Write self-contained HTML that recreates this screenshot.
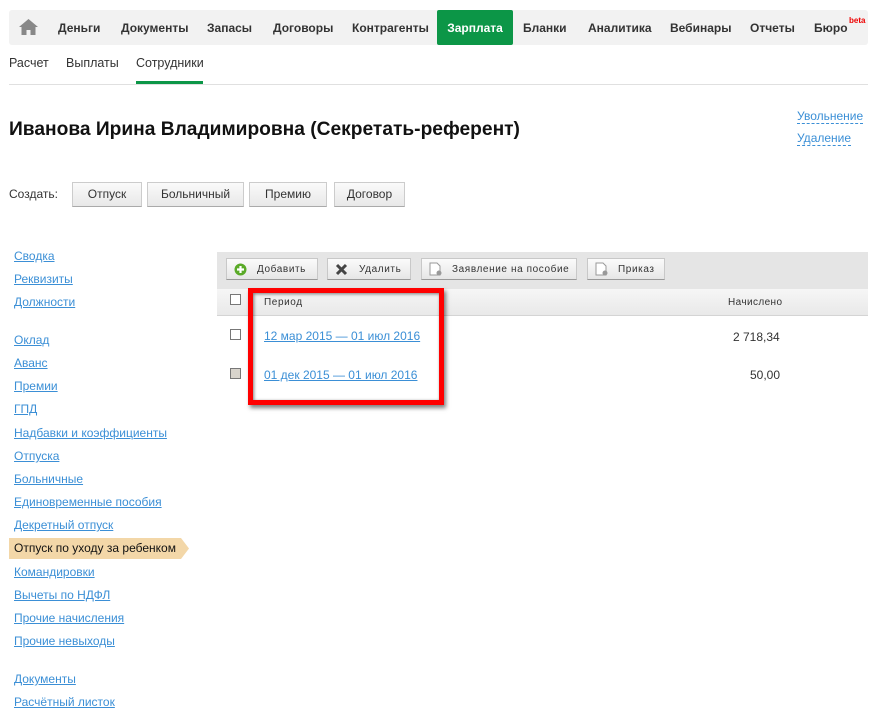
<!DOCTYPE html>
<html><head><meta charset="utf-8"><style>
*{margin:0;padding:0;box-sizing:border-box}
body{width:881px;height:723px;background:#fff;font-family:"Liberation Sans",Arial,sans-serif;position:relative;overflow:hidden;color:#222}
.a{position:absolute;white-space:nowrap}
.nav{left:9px;top:10px;width:859px;height:35px;background:#f2f2f2;border-radius:3px}
.ni{font-size:12px;font-weight:bold;color:#333;top:21px}
.act{left:437px;top:10px;width:76px;height:35px;background:#0c9647;border-radius:2px;color:#fff;font-weight:bold;font-size:12px;text-align:center;line-height:37px}
.sub{font-size:12.5px;color:#333;top:56px}
a,.lk{color:#3b8fd6;text-decoration:underline}
.side{font-size:12px;left:14px}
.btn{top:182px;height:25px;background:linear-gradient(#fafafa,#e8e8e8);border:1px solid #ccc;border-bottom-color:#aaa;font-size:12px;color:#333;text-align:center;line-height:23px}
.tb{top:258px;height:22px;background:linear-gradient(#fbfbfb,#e6e6e6);border:1px solid #c8c8c8;border-bottom-color:#999;font-size:10px;letter-spacing:.6px;color:#333;line-height:21px}
.cb{width:11px;height:11px;border:1px solid #777;background:#fff}
.dl{font-size:12px;color:#3b8fd6;border-bottom:1px dashed #3b8fd6;line-height:14px}
</style></head><body>
<div class="a nav"></div>
<svg class="a" style="left:19px;top:19px" width="19" height="16" viewBox="0 0 19 16"><path d="M9.5 0L0 8h2.5v8h5v-5h4v5h5V8H19z" fill="#888"/></svg>
<div class="a ni" style="left:58px">Деньги</div>
<div class="a ni" style="left:121px">Документы</div>
<div class="a ni" style="left:207px">Запасы</div>
<div class="a ni" style="left:273px">Договоры</div>
<div class="a ni" style="left:352px">Контрагенты</div>
<div class="a act">Зарплата</div>
<div class="a ni" style="left:523px">Бланки</div>
<div class="a ni" style="left:588px">Аналитика</div>
<div class="a ni" style="left:670px">Вебинары</div>
<div class="a ni" style="left:750px">Отчеты</div>
<div class="a ni" style="left:814px">Бюро</div>
<div class="a" style="left:849px;top:16px;font-size:8px;color:#e00;font-weight:bold">beta</div>
<div class="a sub" style="left:9px">Расчет</div>
<div class="a sub" style="left:66px">Выплаты</div>
<div class="a sub" style="left:136px">Сотрудники</div>
<div class="a" style="left:136px;top:81px;width:67px;height:3px;background:#0c9647"></div>
<div class="a" style="left:9px;top:84px;width:859px;height:1px;background:#e0e0e0"></div>
<div class="a" style="left:9px;top:119px;font-size:19.2px;font-weight:bold;color:#111">Иванова Ирина Владимировна (Секретать-референт)</div>
<div class="a dl" style="left:797px;top:109px">Увольнение</div>
<div class="a dl" style="left:797px;top:131px">Удаление</div>
<div class="a" style="left:9px;top:187px;font-size:12px;color:#333">Создать:</div>
<div class="a btn" style="left:72px;width:70px">Отпуск</div>
<div class="a btn" style="left:147px;width:97px">Больничный</div>
<div class="a btn" style="left:249px;width:78px">Премию</div>
<div class="a btn" style="left:334px;width:71px">Договор</div>

<div class="a side lk" style="top:249px">Сводка</div>
<div class="a side lk" style="top:272px">Реквизиты</div>
<div class="a side lk" style="top:295px">Должности</div>
<div class="a side lk" style="top:333px">Оклад</div>
<div class="a side lk" style="top:356px">Аванс</div>
<div class="a side lk" style="top:379px">Премии</div>
<div class="a side lk" style="top:402px">ГПД</div>
<div class="a side lk" style="top:426px">Надбавки и коэффициенты</div>
<div class="a side lk" style="top:449px">Отпуска</div>
<div class="a side lk" style="top:472px">Больничные</div>
<div class="a side lk" style="top:495px">Единовременные пособия</div>
<div class="a side lk" style="top:518px">Декретный отпуск</div>
<svg class="a" style="left:9px;top:538px" width="180" height="21"><path d="M0 0H172L180 10.5L172 21H0z" fill="#f3d7a8"/></svg>
<div class="a side" style="top:541px;color:#111">Отпуск по уходу за ребенком</div>
<div class="a side lk" style="top:565px">Командировки</div>
<div class="a side lk" style="top:588px">Вычеты по НДФЛ</div>
<div class="a side lk" style="top:611px">Прочие начисления</div>
<div class="a side lk" style="top:634px">Прочие невыходы</div>
<div class="a side lk" style="top:672px">Документы</div>
<div class="a side lk" style="top:695px">Расчётный листок</div>

<div class="a" style="left:217px;top:252px;width:651px;height:37px;background:#e5e5e5"></div>
<div class="a" style="left:217px;top:289px;width:651px;height:27px;background:linear-gradient(#f6f6f6,#e9e9e9);border-bottom:1px solid #d4d4d4"></div>
<div class="a tb" style="left:226px;width:92px"><svg style="position:absolute;left:7px;top:4px" width="13" height="13"><circle cx="6.5" cy="6.5" r="6" fill="#5aaa28"/><path d="M6.5 3v7M3 6.5h7" stroke="#fff" stroke-width="2.2"/></svg><span style="position:absolute;left:30px">Добавить</span></div>
<div class="a tb" style="left:327px;width:84px"><svg style="position:absolute;left:7px;top:4px" width="13" height="13"><path d="M2 2l9 9M11 2l-9 9" stroke="#444" stroke-width="3"/></svg><span style="position:absolute;left:31px">Удалить</span></div>
<div class="a tb" style="left:421px;width:156px"><svg style="position:absolute;left:6px;top:3px" width="15" height="15"><path d="M2 1h7l3 3v9H2z" fill="#fff" stroke="#999"/><circle cx="11" cy="11" r="2.5" fill="#999"/></svg><span style="position:absolute;left:30px">Заявление на пособие</span></div>
<div class="a tb" style="left:587px;width:78px"><svg style="position:absolute;left:6px;top:3px" width="15" height="15"><path d="M2 1h7l3 3v9H2z" fill="#fff" stroke="#999"/><circle cx="11" cy="11" r="2.5" fill="#999"/></svg><span style="position:absolute;left:30px">Приказ</span></div>
<div class="a cb" style="left:230px;top:294px"></div>
<div class="a" style="left:264px;top:297px;font-size:10px;letter-spacing:.6px;color:#333">Период</div>
<div class="a" style="left:728px;top:297px;font-size:10px;letter-spacing:.4px;color:#333">Начислено</div>
<div class="a cb" style="left:230px;top:329px"></div>
<div class="a cb" style="left:230px;top:368px;background:#d8d4cc"></div>
<div class="a lk" style="left:264px;top:329px;font-size:12px">12 мар 2015 — 01 июл 2016</div>
<div class="a lk" style="left:264px;top:368px;font-size:12px">01 дек 2015 — 01 июл 2016</div>
<div class="a" style="left:733px;top:330px;font-size:12px;color:#333">2 718,34</div>
<div class="a" style="left:750px;top:368px;font-size:12px;color:#333">50,00</div>
<div class="a" style="left:248px;top:288px;width:196px;height:117px;border:5px solid #f00;box-shadow:2px 3px 4px rgba(0,0,0,.5),inset 1px 1px 3px rgba(0,0,0,.5)"></div>
</body></html>
